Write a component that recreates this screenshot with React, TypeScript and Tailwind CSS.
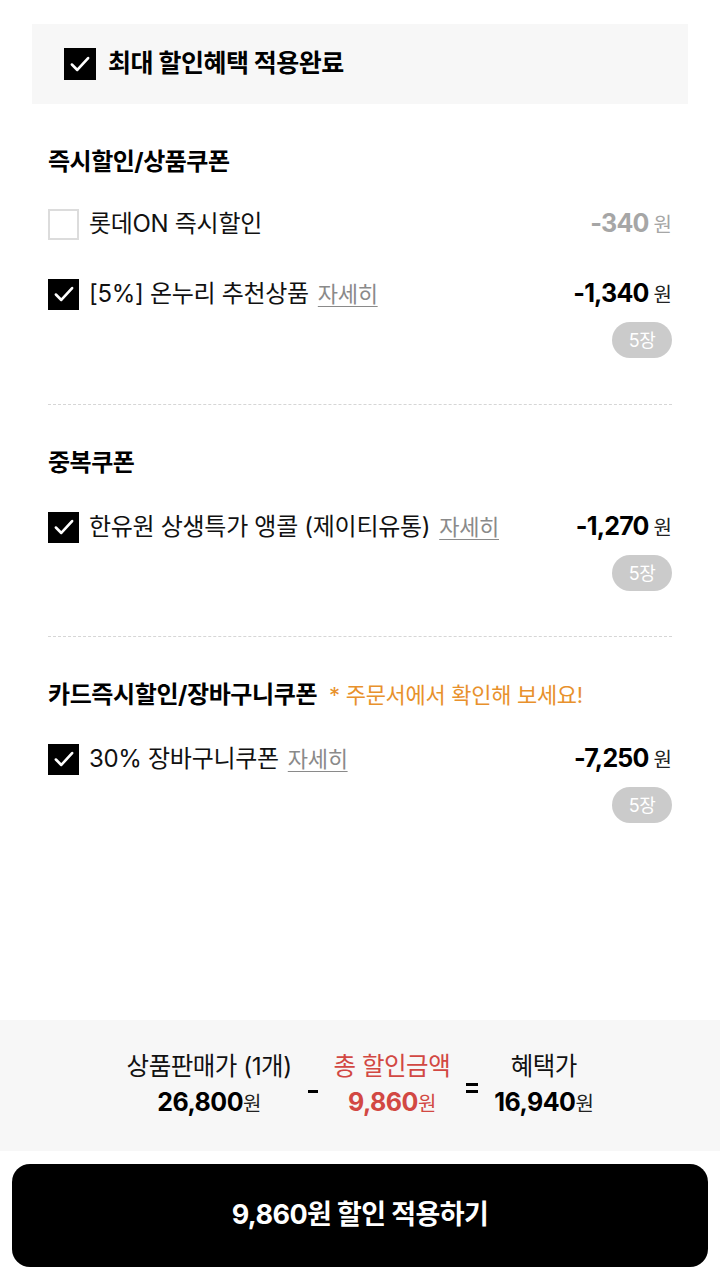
import React from "react";

const font = { fontFamily: 'Inter, "Noto Sans CJK KR", "Noto Sans", sans-serif' };

function Check({ on, size = "w-[31px] h-[31px]" }: { on: boolean; size?: string }) {
  if (!on) {
    return <div className={`${size} shrink-0 border-2 border-[#dcdcdc] bg-white`} />;
  }
  return (
    <div className={`${size} shrink-0 bg-black flex items-center justify-center`}>
      <svg viewBox="0 0 24 24" className="w-[26px] h-[26px]" fill="none" stroke="white" strokeWidth="2.4" strokeLinecap="round" strokeLinejoin="round">
        <path d="M4.5 12.5l5 5L19.5 6.5" />
      </svg>
    </div>
  );
}

function Amount({ value, gray }: { value: string; gray?: boolean }) {
  return (
    <div className={`flex items-baseline gap-[5px] ${gray ? "text-[#a6a6a6]" : "text-black"}`}>
      <span className="text-[25px] font-bold tracking-[-0.8px]">{value}</span>
      <span className={`text-[20px] ${gray ? "text-[#a6a6a6]" : "text-[#222]"}`}>원</span>
    </div>
  );
}

function Row({ on, label, detail, amount, gray }: { on: boolean; label: string; detail?: boolean; amount: string; gray?: boolean }) {
  return (
    <div className="h-[40px] flex items-center justify-between">
      <div className="flex items-center gap-[10px]">
        <Check on={on} />
        <span className="text-[24px] text-[#111] tracking-[-0.3px]">{label}</span>
        {detail && <span className="text-[22px] text-[#8a8a8a] underline underline-offset-[4px] decoration-1 -ml-[1px] tracking-[-0.3px]">자세히</span>}
      </div>
      <Amount value={amount} gray={gray} />
    </div>
  );
}

function Badge() {
  return (
    <div className="flex justify-end mt-[8px]">
      <div className="w-[60px] h-[36px] rounded-full bg-[#cbcbcb] text-white text-[18px] flex items-center justify-center tracking-[-0.5px]">5장</div>
    </div>
  );
}

export default function App() {
  return (
    <div style={font} className="w-[720px] h-[1280px] bg-white flex flex-col">
      <div className="mx-8 mt-6 h-[80px] bg-[#f7f7f7] flex items-center pl-8 gap-[12px]">
        <Check on size="w-[32px] h-[32px]" />
        <span className="text-[25px] font-bold text-black tracking-[-0.5px]">최대 할인혜택 적용완료</span>
      </div>

      <div className="px-12">
        <div className="pt-[42px] pb-[46px] border-b border-dashed border-[#d6d6d6]">
          <div className="h-[32px] flex items-center text-[24px] font-bold text-black tracking-[-0.5px]">즉시할인/상품쿠폰</div>
          <div className="mt-[26px]">
            <Row on={false} label="롯데ON 즉시할인" amount="-340" gray />
          </div>
          <div className="mt-[30px]">
            <Row on label="[5%] 온누리 추천상품" detail amount="-1,340" />
          </div>
          <Badge />
        </div>

        <div className="pt-[42px] pb-[45px] border-b border-dashed border-[#d6d6d6]">
          <div className="h-[32px] flex items-center text-[24px] font-bold text-black tracking-[-0.5px]">중복쿠폰</div>
          <div className="mt-[28px]">
            <Row on label="한유원 상생특가 앵콜 (제이티유통)" detail amount="-1,270" />
          </div>
          <Badge />
        </div>

        <div className="pt-[42px]">
          <div className="h-[32px] flex items-center gap-[12px]">
            <span className="text-[24px] font-bold text-black tracking-[-0.4px]">카드즉시할인/장바구니쿠폰</span>
            <span className="text-[22px] text-[#e8912c] tracking-[-0.3px]">* 주문서에서 확인해 보세요!</span>
          </div>
          <div className="mt-[28px]">
            <Row on label="30% 장바구니쿠폰" detail amount="-7,250" />
          </div>
          <Badge />
        </div>
      </div>

      <div className="flex-1" />

      <div className="h-[131px] bg-[#f7f7f7] flex items-center justify-center gap-[16px]">
        <div className="flex flex-col items-center">
          <span className="text-[24.5px] text-[#111] leading-[35px] tracking-[-0.5px]">상품판매가 (1개)</span>
          <span className="leading-[36px] tracking-[-0.5px]"><span className="text-[25px] font-bold text-black">26,800</span><span className="text-[20px] text-[#222]">원</span></span>
        </div>
        <div className="w-[10px] h-[3px] bg-black mt-[12px]" />
        <div className="flex flex-col items-center">
          <span className="text-[24.5px] text-[#d24843] leading-[35px] tracking-[-0.5px]">총 할인금액</span>
          <span className="leading-[36px] tracking-[-0.5px]"><span className="text-[25px] font-bold text-[#d24843]">9,860</span><span className="text-[20px] text-[#d24843]">원</span></span>
        </div>
        <div className="flex flex-col gap-[4px] mt-[4px]">
          <div className="w-[12px] h-[3px] bg-black" />
          <div className="w-[12px] h-[3px] bg-black" />
        </div>
        <div className="flex flex-col items-center">
          <span className="text-[24.5px] text-[#111] leading-[35px] tracking-[-0.5px]">혜택가</span>
          <span className="leading-[36px] tracking-[-0.5px]"><span className="text-[25px] font-bold text-black">16,940</span><span className="text-[20px] text-[#222]">원</span></span>
        </div>
      </div>

      <div className="px-3 pt-[13px] pb-[13px]">
        <div className="h-[103px] rounded-[18px] bg-black flex items-center justify-center text-white text-[27px] font-bold tracking-[-0.6px]">
          9,860원 할인 적용하기
        </div>
      </div>
    </div>
  );
}
